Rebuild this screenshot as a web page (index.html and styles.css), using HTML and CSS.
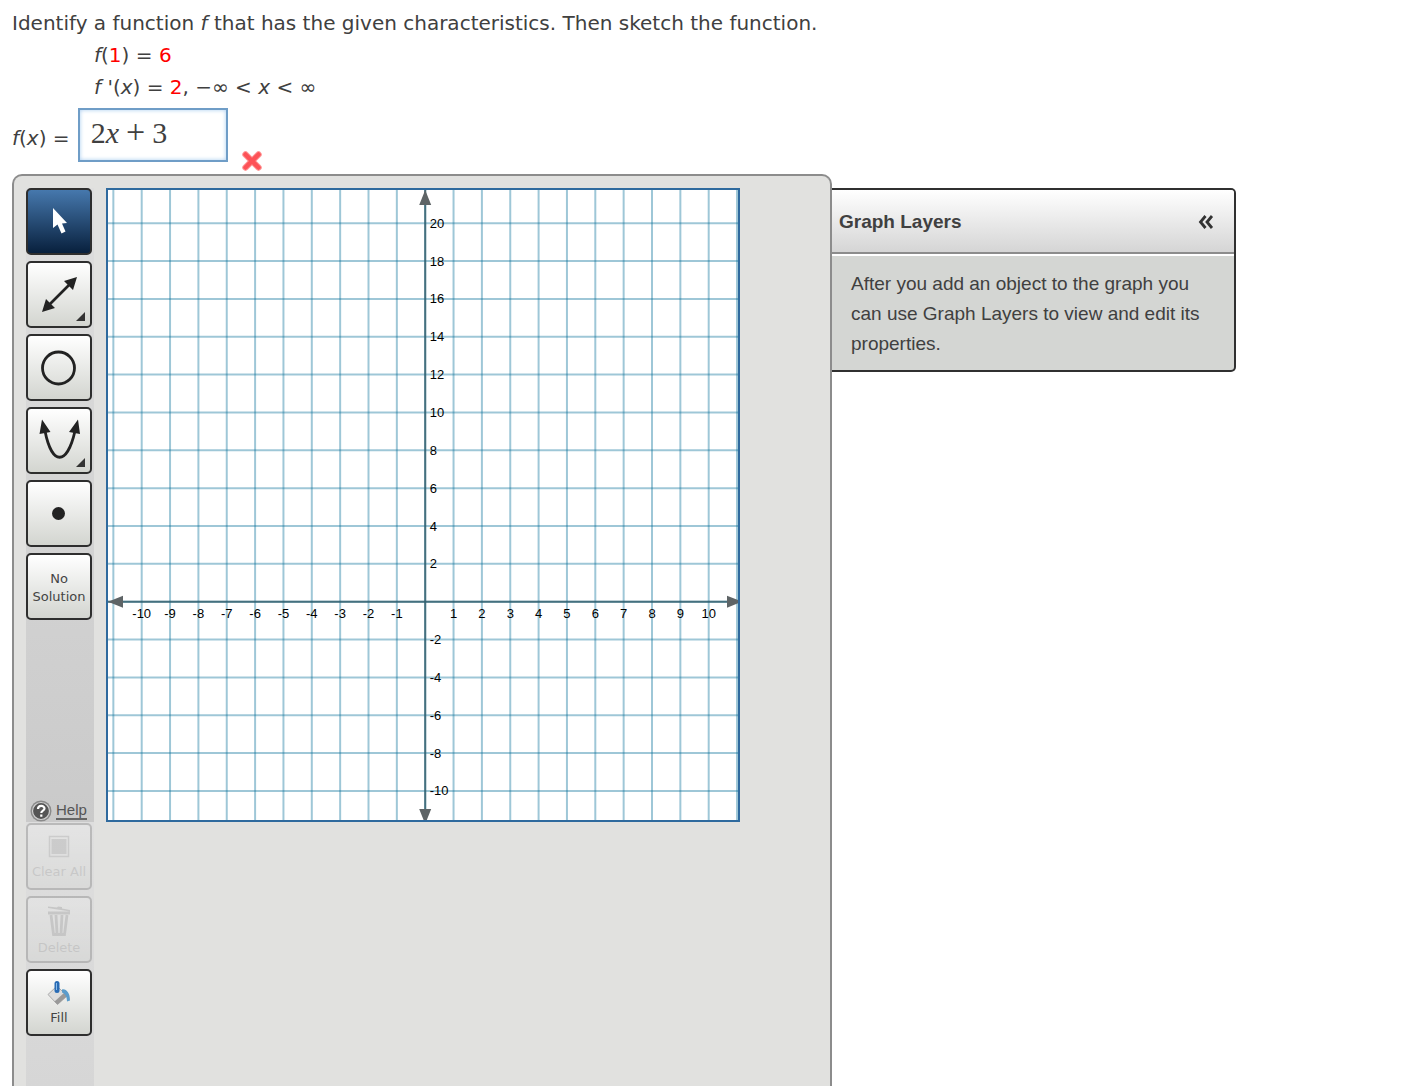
FILE: index.html
```html
<!DOCTYPE html>
<html lang="en">
  <head>
    <meta charset="UTF-8" />
    <title>Sketch the function</title>
    <link rel="stylesheet" href="styles.css">
  </head>

  <body>
    <div class="question">
      <p>Identify a function <i>f</i> that has the given characteristics. Then sketch the function.</p>
      <p class="indent"><i>f</i>(<span class="red">1</span>) = <span class="red">6</span></p>
      <p class="indent"><i>f</i> '(<i>x</i>) = <span class="red">2</span>, −∞ &lt; <i>x</i> &lt; ∞</p>
    </div>
    <div class="answer">
      <label for="answerInput"><i>f</i>(<i>x</i>) =</label>
      <div class="math-box">
        <input type="text" id="answerInput" class="math-input" autocomplete="off" />
        <span class="math-text">2<i>x</i><span class="operator">+</span>3</span>
      </div>
      <svg class="wrong" viewBox="0 0 22 22" role="img" aria-label="Incorrect">
        <path d="M4.5 4.5 17.5 17.5M17.5 4.5 4.5 17.5" stroke="#ff9a9a" stroke-width="6.5" stroke-linecap="round" />
        <path d="M4.5 4.5 17.5 17.5M17.5 4.5 4.5 17.5" stroke="#fd5257" stroke-width="4.5" stroke-linecap="round" />
      </svg>
    </div>

    <div class="workspace">
      <div class="graph-panel">
        <div class="sidebar">
          <div class="tools">
            <button type="button" class="tool active" aria-label="Select">
              <svg viewBox="0 0 62 63">
                <path d="M25 18v20l4.500-3.500 4 9 4-2-3.500-8 5-.5z" fill="#fff" />
              </svg>
            </button>
            <button type="button" class="tool" aria-label="Line">
              <svg viewBox="0 0 62 63">
                <path d="M20 43 43 20" stroke="#222" stroke-width="2.600" />
                <path d="M49 14 36 18l9 9zM14 49l4-13 9 9z" fill="#222" />
                <path d="M57 49v9h-9z" fill="#333" />
              </svg>
            </button>
            <button type="button" class="tool" aria-label="Circle">
              <svg viewBox="0 0 62 63">
                <circle cx="30.500" cy="32" r="16" fill="none" stroke="#222" stroke-width="2.800" />
              </svg>
            </button>
            <button type="button" class="tool" aria-label="Parabola">
              <svg viewBox="0 0 62 63">
                <path d="M17 22C24 57 39 57 47 22" fill="none" stroke="#222" stroke-width="2.800" />
                <path d="M14 10.500 11.500 25l11-2zM50 10.500 41 23l11 2z" fill="#222" />
                <path d="M57 49v9h-9z" fill="#333" />
              </svg>
            </button>
            <button type="button" class="tool" aria-label="Point">
              <svg viewBox="0 0 62 63">
                <circle cx="30.500" cy="31.500" r="6.500" fill="#222" />
              </svg>
            </button>
            <button type="button" class="tool text-tool">No<br />Solution</button>
            <a class="help" href="#help">
              <svg viewBox="0 0 22 22" aria-hidden="true">
                <circle cx="11" cy="11" r="10.500" fill="#8a8a8a" />
                <circle cx="11" cy="11" r="8.500" fill="#555" stroke="#d0d0d0" stroke-width="1.200" />
                <path d="M8 9c0-4 6.500-4 6.500-.5 0 2.300-3.200 2-3.200 4.500M11.300 14.500v2.200" fill="none" stroke="#fff" stroke-width="2.200" />
              </svg>
              <span>Help</span>
            </a>
          </div>
          <div class="actions">
            <button type="button" class="tool text-tool" disabled>
              <svg class="icon" viewBox="0 0 24 24">
                <rect x="2.500" y="1.500" width="19" height="20" fill="none" stroke="#888" stroke-width="1.500" />
                <rect x="4.500" y="4" width="15" height="15" fill="#888" />
              </svg>
              Clear All
            </button>
            <button type="button" class="tool text-tool" disabled>
              <svg class="icon trash" viewBox="0 0 24 32">
                <path d="M1 6.500h22v3H1zM1 1.500l9 1 1-1 4 .5v1.500l8 1.500v1.500L1 3z" fill="#777" />
                <path d="M4 10 6.500 29.500h11L20 10M9 10l1 19M15 10l-1 19" fill="none" stroke="#777" stroke-width="2.800" />
              </svg>
              Delete
            </button>
            <button type="button" class="tool text-tool">
              <svg class="icon" viewBox="0 0 24 24">
                <path d="M1 13.500 10 5l10 10-9.500 8.500z" fill="#ddd" stroke="#aaa" />
                <path d="M10.500 23.500 20 15l-3-3-9.500 8.500z" fill="#999" />
                <path d="M15 8.500c4-1 8 3 8 11l-3 1c0-5-2-8-5-9z" fill="#5b9ccb" />
                <rect x="7.500" y="0" width="5" height="12" rx="2.500" fill="#286bb5" />
                <path d="M9.500 2v7" stroke="#8abbe8" />
              </svg>
              Fill
            </button>
          </div>
        </div>
        <div class="graph">
          <svg id="grid" viewBox="0 0 630 630"></svg>
        </div>
      </div>

      <div class="layers">
        <div class="layers-title">
          <h2>Graph Layers</h2>
          <button type="button" class="collapse" aria-label="Collapse">
            <svg viewBox="0 0 16 14">
              <path d="M7.500 1 2.500 7l5 6M14 1 9 7l5 6" fill="none" stroke="#333" stroke-width="2.800" />
            </svg>
          </button>
        </div>
        <p class="layers-text">After you add an object to the graph you can use Graph Layers to view and edit its properties.</p>
      </div>
    </div>

    <script>
      let grid = document.querySelector("#grid");
      let x0 = 317.2;
      let y0 = 411.7;
      let stepX = 28.35;
      let stepY = 37.85;
      let html = "";

      function line(x1, y1, x2, y2, name) {
        html += `<line x1="${x1}" y1="${y1}" x2="${x2}" y2="${y2}" class="${name}" />`;
      }
      function label(x, y, text, name) {
        html += `<text x="${x}" y="${y}" class="${name}">${text}</text>`;
      }

      for (let i = -11; i <= 11; i++) {
        let x = x0 + i * stepX;
        line(x, 0, x, 630, "grid-line");
      }
      for (let i = -5; i <= 10; i++) {
        let y = y0 - i * stepY;
        line(0, y, 630, y, "grid-line");
      }
      line(0, y0, 630, y0, "axis");
      line(x0, 0, x0, 630, "axis");
      // axis arrows
      html += `<path class="arrow" d="M${x0} 0l6 15h-12zM${x0} 634l6-15h-12zM0 ${y0}l15-6v12zM634 ${y0}l-15-6v12z" />`;

      for (let i = -10; i <= 10; i++) {
        if (i !== 0) {
          label(x0 + i * stepX, y0 + 16, i, "label-x");
        }
      }
      for (let i = -5; i <= 10; i++) {
        if (i !== 0) {
          label(x0 + 4.5, y0 - i * stepY + 4.5, i * 2, "label-y");
        }
      }
      grid.innerHTML = html;
    </script>
  </body>
</html>
```
FILE: styles.css
```css
* {
  box-sizing: border-box;
}

body {
  margin: 0;
  padding: 7px 12px 0;
  min-height: 100vh;
  display: flex;
  flex-direction: column;
  background: #ffffff;
  color: #404040;
  font-family: Verdana, "DejaVu Sans", sans-serif;
  font-size: 20px;
  line-height: 32px;
}

p,
h2 {
  margin: 0;
}

svg {
  display: block;
}

.indent {
  padding-left: 82px;
}

.red {
  color: #ff0000;
}

.answer {
  display: flex;
  align-items: flex-start;
  height: 66px;
  margin-top: 5px;
}

.answer label {
  line-height: 60px;
  margin-right: 8px;
}

.math-box {
  position: relative;
  width: 150px;
  height: 54px;
  padding: 0 11px;
  border: 2px solid #6f9dc7;
  box-shadow: inset 0 0 4px #a9cdf0;
  font-family: "Liberation Serif", serif;
  font-size: 30px;
  line-height: 46px;
}

/* the input takes the typing, the formatted formula lies over it */
.math-input {
  position: absolute;
  top: 0;
  left: 0;
  width: 100%;
  height: 100%;
  border: 0;
  background: none;
  outline: none;
}

.math-text {
  position: relative;
  pointer-events: none;
}

.operator {
  margin: 0 7px;
  font-size: 34px;
  line-height: 1;
}

.wrong {
  width: 22px;
  height: 22px;
  margin-left: 13px;
  margin-top: 42px;
}

.workspace {
  display: flex;
  align-items: flex-start;
  flex: 1;
}

.graph-panel {
  flex: 0 1 820px;
  align-self: stretch;
  display: flex;
  align-items: flex-start;
  gap: 12px;
  padding: 12px 12px 0;
  border: 2px solid #8c8c8c;
  border-bottom: 0;
  border-radius: 10px 10px 0 0;
  background: #e1e1df;
}

.sidebar {
  flex: 0 0 68px;
  align-self: stretch;
  display: flex;
  flex-direction: column;
}

.tools,
.actions {
  display: flex;
  flex-direction: column;
  align-items: flex-start;
  gap: 6px;
}

.tools {
  height: 634px;
  background: linear-gradient(#dedede, #cacaca);
}

.actions {
  flex: 1;
  padding-top: 1px;
  background: linear-gradient(#dedede, #d6d6d6);
}

.tool {
  width: 66px;
  height: 67px;
  padding: 0;
  display: flex;
  flex-direction: column;
  align-items: center;
  justify-content: center;
  border: 2px solid #2e2e2e;
  border-radius: 5px;
  background: linear-gradient(#ffffff, #d3d5d0);
  color: #444444;
  font-family: "DejaVu Sans", sans-serif;
  font-size: 13px;
  line-height: 18px;
  white-space: nowrap;
}

.text-tool {
  padding-top: 3px;
}

.tool svg {
  width: 62px;
  height: 63px;
}

.tool .icon {
  width: 24px;
  height: 24px;
  margin-bottom: 4px;
}

.tool .trash {
  height: 32px;
  margin-bottom: 2px;
}

.tool.active {
  background: linear-gradient(#4678ad, #08203d);
}

.tool:disabled {
  opacity: 0.2;
  color: #777777;
}

.help {
  display: flex;
  align-items: center;
  gap: 4px;
  margin-top: auto;
  padding-left: 4px;
  color: #555555;
  font-family: "Liberation Sans", sans-serif;
  font-size: 15px;
  line-height: 20px;
  text-decoration: none;
}

.help svg {
  width: 22px;
  height: 22px;
}

.help span {
  line-height: 16px;
  border-bottom: 2px solid #666666;
}

.graph {
  flex: 0 1 634px;
  border: 2px solid #2f6a9e;
  background: #ffffff;
}

.graph svg {
  width: 100%;
}

.grid-line {
  stroke: #006b96;
  stroke-opacity: 0.38;
  stroke-width: 2;
}

.axis {
  stroke: #35606f;
  stroke-width: 2;
  stroke-opacity: 0.85;
}

.arrow {
  fill: #5e6466;
}

.label-x,
.label-y {
  fill: #000000;
  font-family: "Liberation Sans", sans-serif;
  font-size: 13px;
}

.label-x {
  text-anchor: middle;
}

.layers {
  flex: 0 1 404px;
  margin-top: 14px;
  border: 2px solid #303030;
  border-left: 0;
  border-radius: 0 5px 5px 0;
  background: #d4d6d3;
  font-family: "Liberation Sans", sans-serif;
  font-size: 19px;
  line-height: 30px;
  overflow: hidden;
}

.layers-title {
  display: flex;
  align-items: center;
  justify-content: space-between;
  height: 64px;
  padding: 2px 20px 0 7px;
  border-bottom: 2px solid #8c8c8c;
  background: linear-gradient(#ffffff, #d5d5d5);
}

.layers-title h2 {
  font-size: 19px;
}

.collapse {
  padding: 0;
  border: 0;
  background: none;
}

.collapse svg {
  width: 16px;
  height: 14px;
}

.layers-text {
  padding: 13px 20px 11px 19px;
  border-top: 2px solid #ffffff;
}
```
